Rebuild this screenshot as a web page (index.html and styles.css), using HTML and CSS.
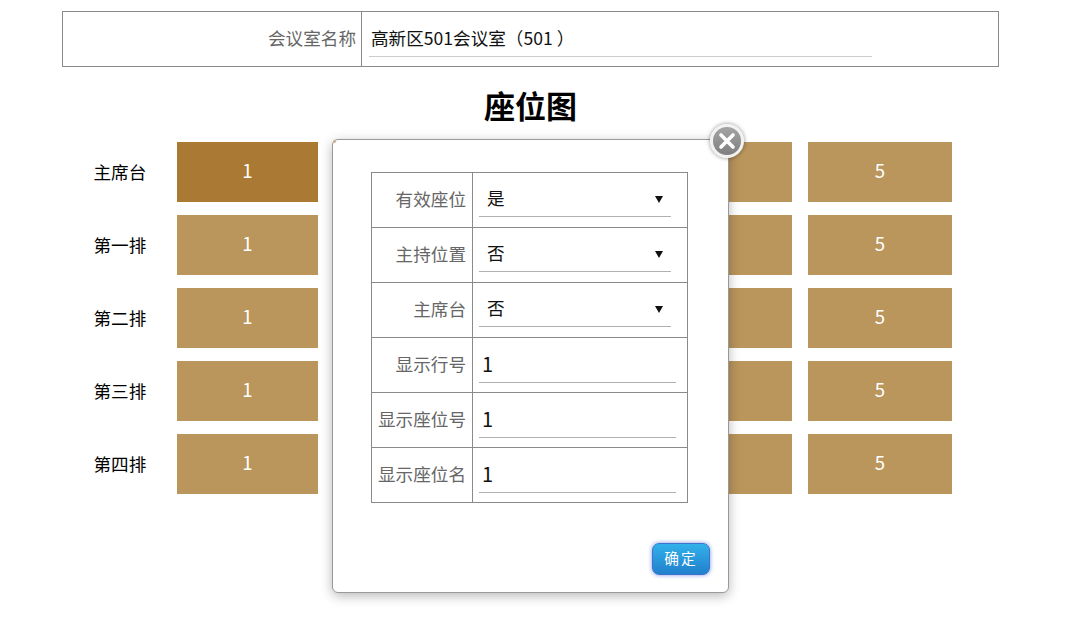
FILE: index.html
```html
<!DOCTYPE html>
<html lang="zh">
<head>
<meta charset="utf-8">
<title>座位图</title>
<link rel="stylesheet" href="styles.css">
</head>
<body>
<main class="page">
  <table class="info">
    <tr>
      <th class="info-label">会议室名称</th>
      <td class="info-value"><div class="info-line">高新区501会议室（501<span class="paren-close">）</span></div></td>
    </tr>
  </table>
  <h1 class="title">座位图</h1>
  <section class="rows">
    <div class="row"><span class="row-name">主席台</span><div class="seat seat-a active">1</div><div class="seat seat-b"></div><div class="seat seat-b"></div><div class="seat seat-b"></div><div class="seat seat-c">5</div></div>
    <div class="row"><span class="row-name">第一排</span><div class="seat seat-a">1</div><div class="seat seat-b"></div><div class="seat seat-b"></div><div class="seat seat-b"></div><div class="seat seat-c">5</div></div>
    <div class="row"><span class="row-name">第二排</span><div class="seat seat-a">1</div><div class="seat seat-b"></div><div class="seat seat-b"></div><div class="seat seat-b"></div><div class="seat seat-c">5</div></div>
    <div class="row"><span class="row-name">第三排</span><div class="seat seat-a">1</div><div class="seat seat-b"></div><div class="seat seat-b"></div><div class="seat seat-b"></div><div class="seat seat-c">5</div></div>
    <div class="row"><span class="row-name">第四排</span><div class="seat seat-a">1</div><div class="seat seat-b"></div><div class="seat seat-b"></div><div class="seat seat-b"></div><div class="seat seat-c">5</div></div>
  </section>
</main>
<div class="dialog">
  <span class="corner-mark"></span>
  <button class="close" type="button" aria-label="关闭">
    <svg viewBox="0 0 20 20" width="20" height="20"><path d="M4 4 L16 16 M16 4 L4 16" stroke="#fff" stroke-width="3.6" stroke-linecap="round"/></svg>
  </button>
  <table class="form">
    <tr><th>有效座位</th><td><div class="select">是</div></td></tr>
    <tr><th>主持位置</th><td><div class="select">否</div></td></tr>
    <tr><th>主席台</th><td><div class="select">否</div></td></tr>
    <tr><th>显示行号</th><td><div class="field">1</div></td></tr>
    <tr><th>显示座位号</th><td><div class="field">1</div></td></tr>
    <tr><th>显示座位名</th><td><div class="field">1</div></td></tr>
  </table>
  <div class="actions"><button class="ok" type="button">确定</button></div>
</div>
</body>
</html>
```
FILE: styles.css
```css
* { box-sizing: border-box; }
html, body { margin: 0; padding: 0; }
body {
  background: #fff;
  font-family: "Noto Sans CJK SC", "Noto Sans", sans-serif;
  color: #000;
  height: 638px;
  overflow: hidden;
  position: relative;
}
.page { padding: 11px 72px 0 62px; }
table { border-collapse: collapse; table-layout: fixed; }
th { font-weight: 400; }

.info { width: 937px; height: 56px; border: 1px solid #8a8a8a; }
.info-label {
  width: 299px;
  padding: 0 5px 3px 0;
  text-align: right;
  color: #666;
  font-size: 17.6px;
  line-height: 24px;
  border-right: 1px solid #8a8a8a;
}
.info-value { padding: 0 0 0 7px; vertical-align: top; }
.info-line {
  width: 503px;
  height: 45px;
  padding: 10px 0 0 2px;
  font-size: 17.6px;
  line-height: 32px;
  border-bottom: 1px solid #ccc;
  color: #111;
  overflow: hidden;
  white-space: nowrap;
}
.paren-close { margin-left: 4px; }

.title {
  margin: 15px 0 0;
  width: 937px;
  text-align: center;
  font-size: 31px;
  font-weight: 700;
  line-height: 46px;
  height: 46px;
}

.rows { margin-top: 14px; display: flex; flex-direction: column; gap: 13px; width: 890px; }
.row { display: flex; align-items: stretch; height: 60px; }
.row-name {
  width: 115px;
  padding-left: 31.5px;
  font-size: 17.6px;
  line-height: 59px;
  white-space: nowrap;
}
.seat {
  background: #ba955c;
  color: #fff;
  font-size: 18.67px;
  line-height: 55px;
  text-align: center;
  margin-right: 16px;
}
.seat:last-child { margin-right: 0; }
.seat-a { width: 141px; }
.seat-b { width: 142px; }
.seat-c { width: 144px; }
.active { background: #aa7a35; }

.dialog {
  position: absolute;
  left: 332px;
  top: 139px;
  width: 397px;
  height: 454px;
  background: #fff;
  border: 1px solid #999;
  border-radius: 6px;
  box-shadow: 0 3px 12px rgba(0, 0, 0, 0.28);
  padding: 32px 0 0 38px;
}
.corner-mark {
  position: absolute;
  left: 0;
  top: 0;
  width: 3px;
  height: 3px;
  background: #c9b28c;
  border-radius: 2px;
}
.close {
  position: absolute;
  left: 377px;
  top: -16px;
  width: 34px;
  height: 34px;
  padding: 0;
  display: flex;
  align-items: center;
  justify-content: center;
  border: 3px solid #f2f2f2;
  border-radius: 50%;
  background: linear-gradient(#a4a4a4, #7f7f7f);
  box-shadow: 0 0 4px rgba(0, 0, 0, 0.45);
}
.form { width: 317px; border: 1px solid #8a8a8a; }
.form tr { height: 55px; }
.form th {
  width: 101px;
  padding: 0 6px 2px 0;
  text-align: right;
  color: #666;
  font-size: 17.6px;
  line-height: 24px;
  border: 1px solid #8a8a8a;
  white-space: nowrap;
}
.form td { border: 1px solid #8a8a8a; padding: 0 0 0 6px; vertical-align: top; }
.select {
  position: relative;
  width: 192px;
  height: 44px;
  padding: 8px 0 0 8px;
  font-size: 17.6px;
  line-height: 34px;
  color: #111;
  border-bottom: 1px solid #b0b0b0;
}
.select::after {
  content: "";
  position: absolute;
  right: 8px;
  top: 23px;
  border-left: 4px solid transparent;
  border-right: 4px solid transparent;
  border-top: 7px solid #111;
}
.field {
  width: 197px;
  height: 45px;
  padding: 9px 0 0 3px;
  font-size: 20px;
  line-height: 34px;
  color: #111;
  border-bottom: 1px solid #b0b0b0;
}

.actions { display: flex; justify-content: flex-end; padding: 40px 18px 0 0; }
.ok {
  width: 58px;
  height: 32px;
  padding: 0 0 2px;
  border: 1px solid #3d74c9;
  border-radius: 7px;
  background: linear-gradient(#32b1ea, #2180cd);
  box-shadow: 0 0 4px rgba(70, 100, 220, 0.7);
  color: #fff;
  font-family: "Noto Sans CJK SC", sans-serif;
  font-size: 14.67px;
  letter-spacing: 2px;
  line-height: 28px;
}
```
